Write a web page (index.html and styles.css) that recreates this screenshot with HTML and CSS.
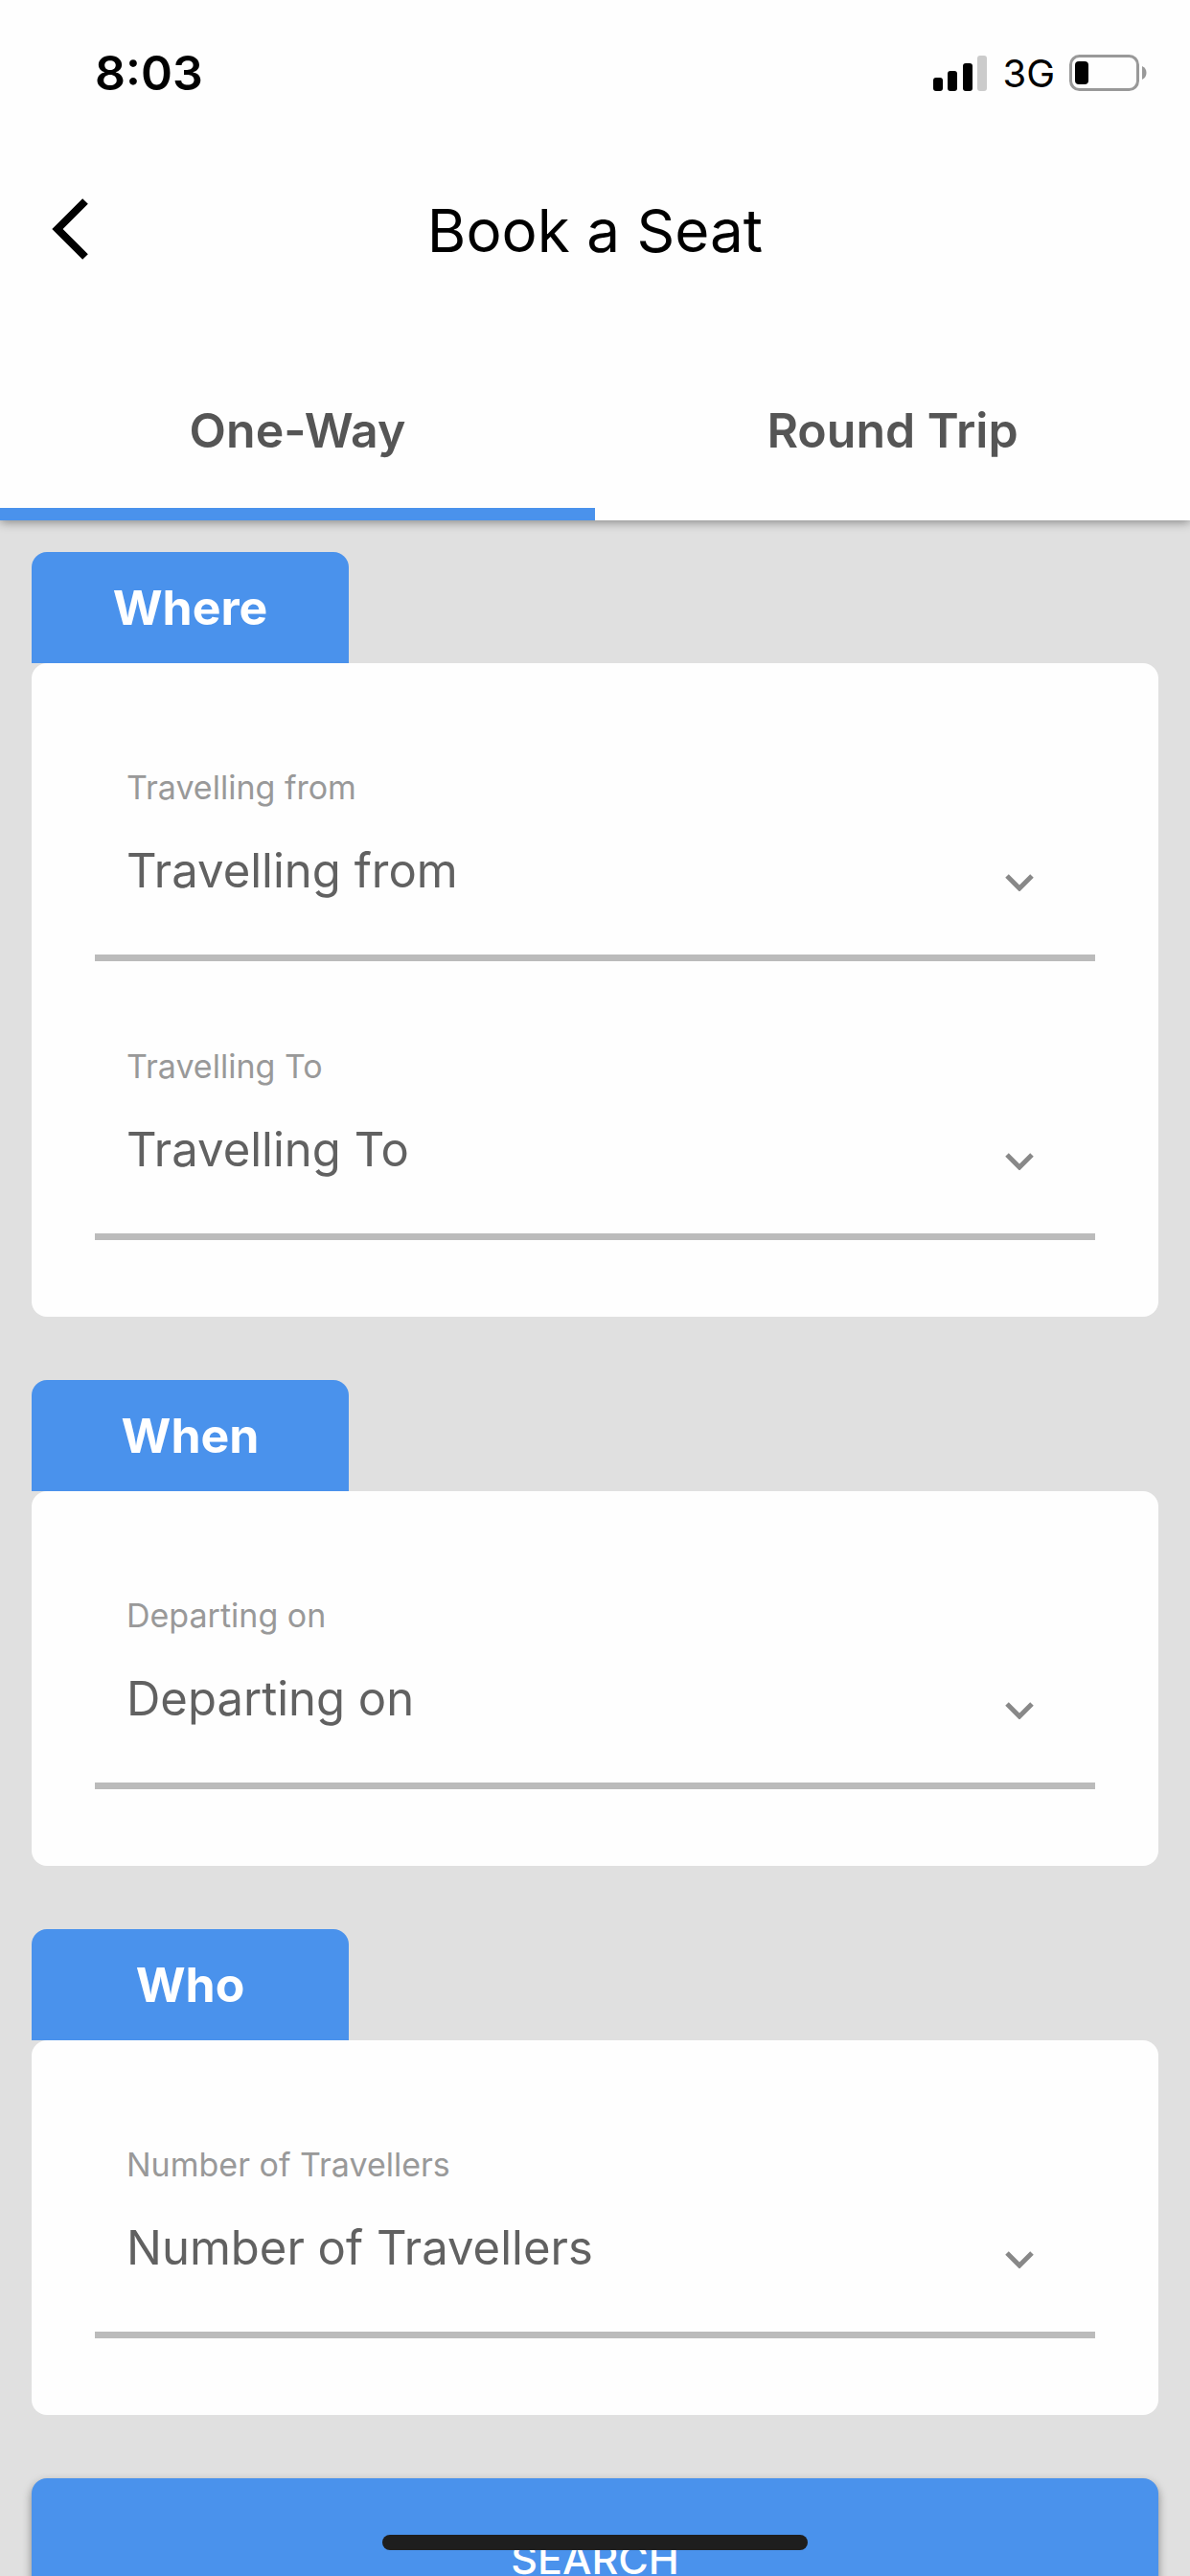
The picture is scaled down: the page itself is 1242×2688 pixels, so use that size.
FILE: index.html
```html
<!DOCTYPE html>
<html lang="en">
<head>
    <meta charset="UTF-8">
    <meta name="viewport" content="width=device-width, initial-scale=1.0">
    <title>Book a Seat</title>
    <link rel="stylesheet" href="styles.css">
</head>
<body>
    <header class="header">
        <div class="status-bar">
            <span class="time">8:03</span>
            <div class="status-icons">
                <svg class="signal" viewBox="0 0 57 37" width="57" height="37" aria-hidden="true">
                    <rect x="0" y="23" width="10" height="14" rx="3"/>
                    <rect x="15" y="16" width="10" height="21" rx="3"/>
                    <rect x="31" y="8" width="10" height="29" rx="3"/>
                    <rect x="46" y="0" width="10" height="37" rx="3" fill="#cbcbcb"/>
                </svg>
                <span class="network">3G</span>
                <svg class="battery" viewBox="0 0 82 38" width="82" height="38" aria-hidden="true">
                    <rect x="1.5" y="1.5" width="70" height="35" rx="9" fill="none" stroke="#999" stroke-width="3"/>
                    <rect x="6" y="7" width="14" height="24" rx="4"/>
                    <path d="M76 12q4.5 2 4.5 7t-4.5 7z" fill="#999"/>
                </svg>
            </div>
        </div>

        <div class="title-bar">
            <button type="button" class="back" aria-label="Back">
                <svg viewBox="0 0 38 66" width="38" height="66" aria-hidden="true">
                    <path d="M35 3L6 32L35 61" fill="none" stroke="#000" stroke-width="8"/>
                </svg>
            </button>
            <h1>Book a Seat</h1>
        </div>

        <nav class="tabs">
            <button type="button" class="tab active">One-Way</button>
            <button type="button" class="tab">Round Trip</button>
        </nav>
    </header>

    <main class="content">
        <form class="booking-form">
            <section class="section">
                <h2>Where</h2>
                <div class="card">
                    <div class="field">
                        <label for="from">Travelling from</label>
                        <div class="select-row">
                            <select id="from">
                                <option value="">Travelling from</option>
                            </select>
                            <svg class="arrow" viewBox="0 0 30 18" width="30" height="18" aria-hidden="true">
                                <path d="M2 2L15 15L28 2"/>
                            </svg>
                        </div>
                    </div>
                    <div class="field">
                        <label for="to">Travelling To</label>
                        <div class="select-row">
                            <select id="to">
                                <option value="">Travelling To</option>
                            </select>
                            <svg class="arrow" viewBox="0 0 30 18" width="30" height="18" aria-hidden="true">
                                <path d="M2 2L15 15L28 2"/>
                            </svg>
                        </div>
                    </div>
                </div>
            </section>

            <section class="section">
                <h2>When</h2>
                <div class="card">
                    <div class="field">
                        <label for="departing">Departing on</label>
                        <div class="select-row">
                            <select id="departing">
                                <option value="">Departing on</option>
                            </select>
                            <svg class="arrow" viewBox="0 0 30 18" width="30" height="18" aria-hidden="true">
                                <path d="M2 2L15 15L28 2"/>
                            </svg>
                        </div>
                    </div>
                </div>
            </section>

            <section class="section">
                <h2>Who</h2>
                <div class="card">
                    <div class="field">
                        <label for="travellers">Number of Travellers</label>
                        <div class="select-row">
                            <select id="travellers">
                                <option value="">Number of Travellers</option>
                            </select>
                            <svg class="arrow" viewBox="0 0 30 18" width="30" height="18" aria-hidden="true">
                                <path d="M2 2L15 15L28 2"/>
                            </svg>
                        </div>
                    </div>
                </div>
            </section>

            <button type="submit" class="search">SEARCH</button>
        </form>
    </main>

    <div class="home-indicator"></div>
</body>
</html>
```
FILE: styles.css
```css
* {
    box-sizing: border-box;
}
body {
    margin: 0;
    height: 100vh;
    display: flex;
    flex-direction: column;
    overflow: hidden;
    font-family: Inter, 'Liberation Sans', sans-serif;
    background: #e0e0e0;
    color: #000;
}
button, select {
    font-family: inherit;
    border: none;
    background: none;
    padding: 0;
    margin: 0;
    cursor: pointer;
}

/* header */
.header {
    position: relative;
    flex-shrink: 0;
    background: #fefefe;
    box-shadow: 0 2px 10px rgba(0,0,0,0.4);
}
.status-bar {
    display: flex;
    justify-content: space-between;
    align-items: center;
    height: 132px;
    padding: 20px 44px 0 99px;
}
.time {
    font-size: 50px;
    font-weight: 600;
}
.status-icons {
    display: flex;
    align-items: center;
    gap: 15px;
}
.network {
    font-size: 40px;
}
.title-bar {
    display: grid;
    grid-template-columns: 1fr auto 1fr;
    align-items: center;
    height: 216px;
    padding: 0 54px;
}
.back {
    justify-self: start;
}
.back svg {
    display: block;
}
h1 {
    margin: 0;
    font-size: 62px;
    font-weight: 400;
}
.tabs {
    display: flex;
    padding-top: 20px;
}
.tab {
    flex: 1;
    height: 175px;
    border-bottom: 13px solid transparent;
    font-size: 50px;
    font-weight: 600;
    color: #555;
}
.tab.active {
    border-bottom-color: #4a92ec;
}

/* form */
.content {
    flex: 1;
    min-height: 0;
    overflow-y: auto;
    scrollbar-width: none;
    padding: 33px;
}
.section {
    margin-bottom: 66px;
}
h2 {
    width: 331px;
    margin: 0;
    font-size: 50px;
    font-weight: 700;
    line-height: 116px;
    text-align: center;
    color: #fff;
    background: #4a92ec;
    border-radius: 16px 16px 0 0;
}
.card {
    display: flex;
    flex-direction: column;
    gap: 46px;
    padding: 66px 66px 80px;
    background: #fefefe;
    border-radius: 16px;
}
.field {
    padding: 42px 0 58px 33px;
    border-bottom: 7px solid #bbb;
}
.field label {
    display: block;
    margin-bottom: 34px;
    font-size: 34px;
    line-height: 44px;
    color: #999;
}
.select-row {
    display: grid;
    align-items: center;
}
.select-row select,
.select-row .arrow {
    grid-area: 1 / 1;
}
.select-row select {
    width: 100%;
    height: 60px;
    appearance: none;
    font-size: 49px;
    color: #616161;
}
.arrow {
    justify-self: end;
    margin: 26px 64px 0 0;
    fill: none;
    stroke: #888;
    stroke-width: 5;
    pointer-events: none;
}
.search {
    display: block;
    width: 100%;
    height: 168px;
    border-radius: 16px;
    background: #4a92ec;
    box-shadow: 0 4px 10px rgba(0,0,0,0.4);
    font-size: 43px;
    font-weight: 500;
    color: #fff;
}

.home-indicator {
    position: fixed;
    bottom: 27px;
    left: 50%;
    width: 444px;
    height: 16px;
    margin-left: -222px;
    border-radius: 8px;
    background: #1e1e1e;
}
```
